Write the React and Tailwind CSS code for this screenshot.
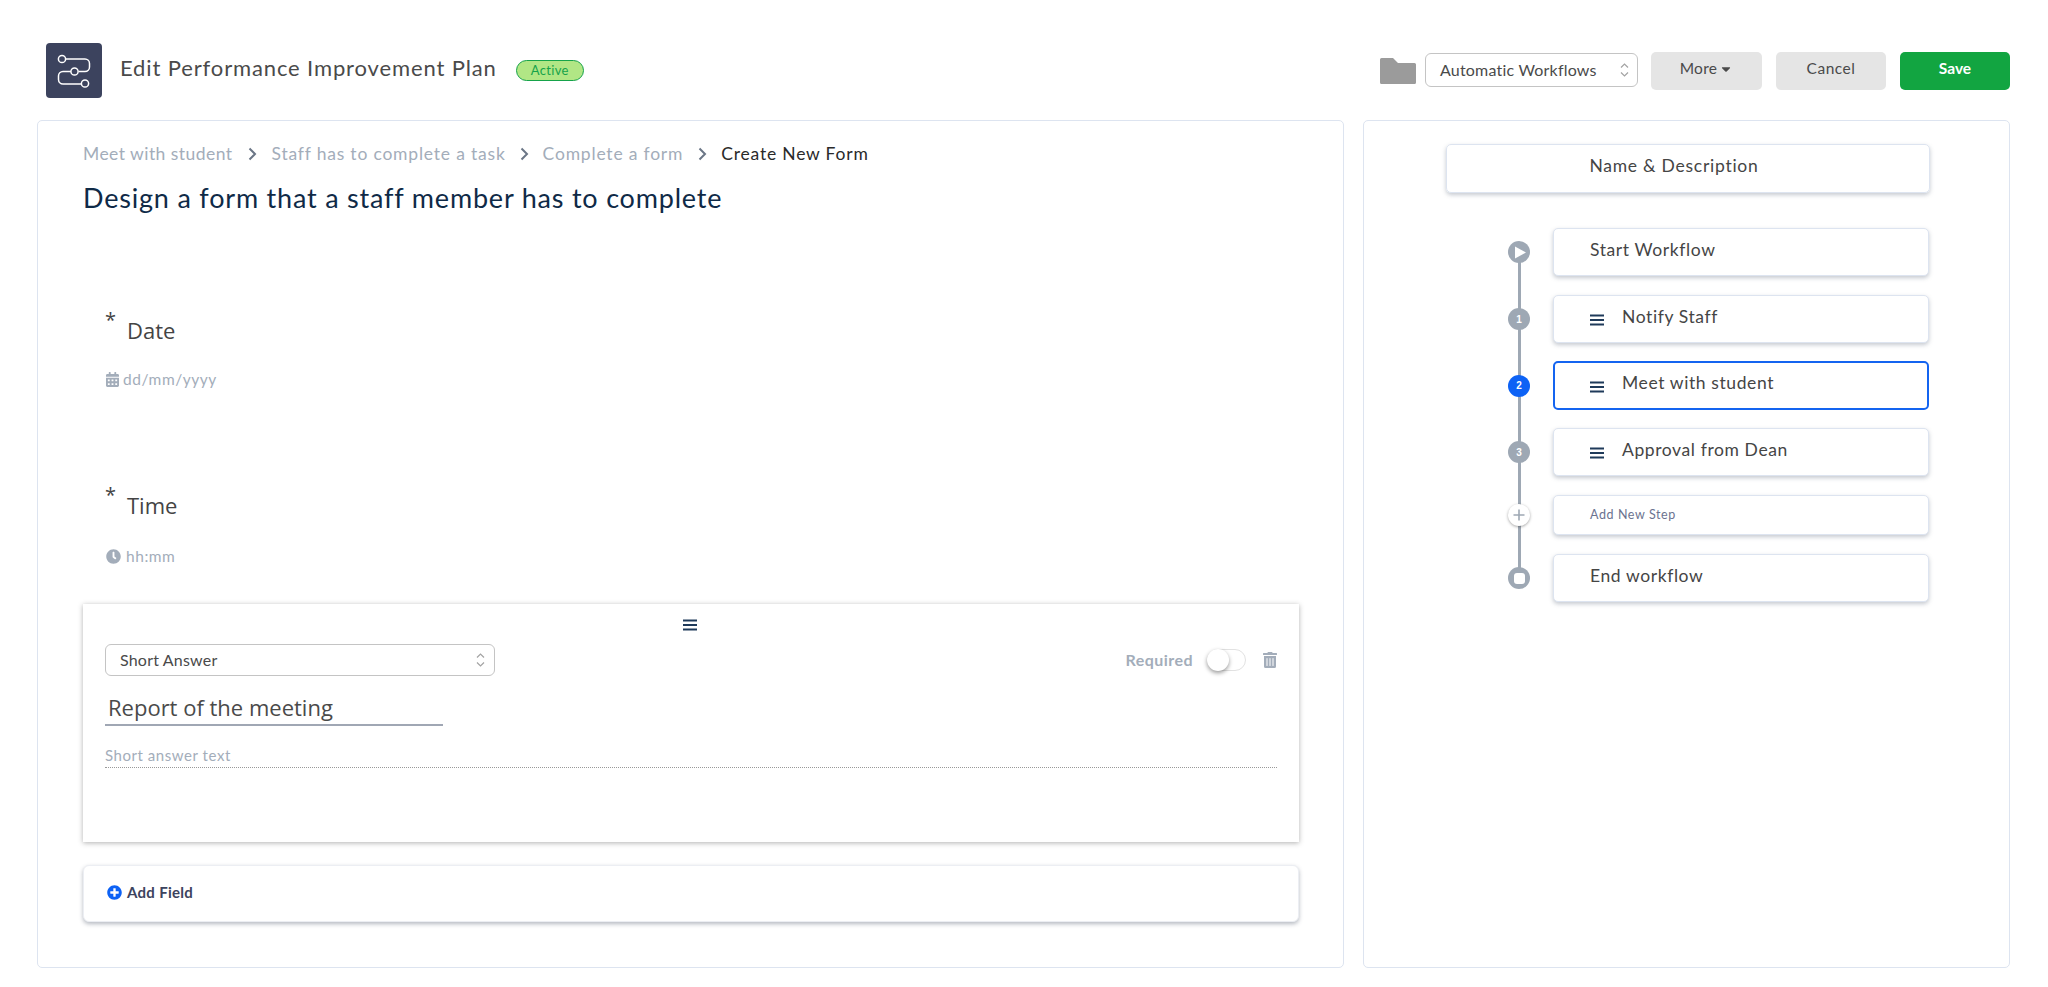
import React from "react";
import { FaCalendarAlt, FaClock, FaTrashAlt, FaPlusCircle, FaCaretDown } from "react-icons/fa";

const sans = "font-['Lato','Liberation_Sans',sans-serif]";
const open = "font-['Open_Sans','Liberation_Sans',sans-serif]";

function Updown() {
  return (
    <svg width="9" height="16" viewBox="0 0 9 16" fill="none" stroke="#a3a3a3" strokeWidth="1.2">
      <path d="M1 5.5 L4.5 2 L8 5.5" />
      <path d="M1 10.5 L4.5 14 L8 10.5" />
    </svg>
  );
}

function Bars({ w = 14 }) {
  return (
    <svg width={w} height="12" viewBox="0 0 14 12" fill="#1f3a5a">
      <rect x="0" y="0.5" width="14" height="2" />
      <rect x="0" y="5" width="14" height="2" />
      <rect x="0" y="9.5" width="14" height="2" />
    </svg>
  );
}

function Logo() {
  return (
    <div className="w-[56px] h-[55px] rounded-[4px] bg-[#3c435e] flex items-center justify-center">
      <svg width="36" height="34" viewBox="0 0 36 34" fill="none" stroke="#ffffff" strokeWidth="1.5">
        <circle cx="6" cy="5" r="3.6" />
        <path d="M9.6 5 H29 a4.5 4.5 0 0 1 4.5 4.5 v3.5 a4.5 4.5 0 0 1 -4.5 4.5 H22.5" />
        <circle cx="18.5" cy="17.5" r="3.6" />
        <path d="M14.8 17.5 H7 a4.5 4.5 0 0 0 -4.5 4.5 v3.5 a4.5 4.5 0 0 0 4.5 4.5 H25.5" />
        <circle cx="29" cy="29.5" r="3.6" />
      </svg>
    </div>
  );
}

function Folder() {
  return (
    <svg width="36" height="26" viewBox="0 0 36 26" fill="#9b9b9b" className="mt-[15px]">
      <path d="M1.5 0 H13 L18 5 H34.5 A1.5 1.5 0 0 1 36 6.5 V24.5 A1.5 1.5 0 0 1 34.5 26 H1.5 A1.5 1.5 0 0 1 0 24.5 V1.5 A1.5 1.5 0 0 1 1.5 0 Z" />
    </svg>
  );
}

function Chevron() {
  return (
    <svg width="10" height="14" viewBox="0 0 10 14" fill="none" stroke="#6b7686" strokeWidth="2">
      <path d="M2.5 1.5 L8 7 L2.5 12.5" />
    </svg>
  );
}

function Field({ label, icon, hint, gap, top, hintTop }) {
  return (
    <div className={top}>
      <div className={`${open} flex items-start pl-[22px] text-[#444]`}>
        <span className="text-[20px] leading-[20px] w-[22px]">*</span>
        <span className="text-[22px] leading-[30px] mt-[5px]">{label}</span>
      </div>
      <div className={`${sans} ${hintTop} flex items-center pl-[23px] text-[15.5px] leading-[20px] tracking-[0.55px] text-[#a3adba] ${gap}`}>
        {icon}
        <span>{hint}</span>
      </div>
    </div>
  );
}

function Step({ marker, children, h, active, mb = "mb-[19px]" }) {
  return (
    <div className={`flex items-center ${mb}`}>
      <div className="w-[22px] flex justify-center relative z-10 ml-[-1px]">{marker}</div>
      <div
        className={`ml-[23px] w-[376px] bg-white rounded-[5px] flex items-center ${h} ${sans} ${
          active
            ? "border-2 border-[#1464f0] shadow-none"
            : "border border-[#dde4f0] shadow-[0_2px_4px_rgba(90,100,120,0.35)]"
        }`}
      >
        {children}
      </div>
    </div>
  );
}

function Num({ n, blue }) {
  return (
    <div
      className={`w-[22px] h-[22px] rounded-full flex items-center justify-center text-white text-[10px] font-bold ${
        blue ? "bg-[#0d62f5]" : "bg-[#9ea8b4]"
      } font-['Liberation_Sans',sans-serif]`}
    >
      {n}
    </div>
  );
}

function StepLabel({ children, bars, active }) {
  return (
    <div className={`flex items-center text-[17.5px] tracking-[0.6px] text-[#454545] ${active ? "pl-[35px] mt-[-4px]" : "pl-[36px] mt-[-4px]"}`}>
      {bars && <span className="w-[32px] flex mt-[6px]"><Bars /></span>}
      {children}
    </div>
  );
}

export default function App() {
  return (
    <div className={`w-[2048px] h-[987px] bg-white overflow-hidden flex flex-col ${sans}`}>
      <header className="h-[120px] flex items-start pl-[46px] pr-[38px] pt-[43px]">
        <Logo />
        <h1 className="ml-[18px] mt-[11px] text-[22px] leading-[28px] tracking-[0.87px] text-[#4a4a4a] font-normal">
          Edit Performance Improvement Plan
        </h1>
        <span className="ml-[19px] mt-[17px] w-[68px] h-[21px] rounded-full bg-[#b1e685] border border-[#16a34a] text-[#16a34a] text-[13px] leading-[18px] tracking-[0.3px] text-center">
          Active
        </span>
        <div className="ml-auto flex items-start">
          <Folder />
          <div className="ml-[9px] mt-[10px] w-[213px] h-[34px] rounded-[6px] border border-[#c4c4c4] bg-white flex items-center justify-between pl-[14px] pr-[8px] text-[16px] tracking-[0.2px] text-[#4a4a4a]">
            <span>Automatic Workflows</span>
            <Updown />
          </div>
          <div className="ml-[13px] mt-[9px] w-[111px] h-[38px] rounded-[5px] bg-[#e5e5e5] flex items-center justify-center gap-[2px] text-[15.5px] tracking-[0.3px] text-[#4a4a4a] pb-[4px]">
            More <FaCaretDown className="w-[14px] h-[14px]" />
          </div>
          <div className="ml-[14px] mt-[9px] w-[110px] h-[38px] rounded-[5px] bg-[#e5e5e5] flex items-center justify-center text-[15.5px] tracking-[0.5px] text-[#4a4a4a] pb-[4px]">
            Cancel
          </div>
          <div className="ml-[14px] mt-[9px] w-[110px] h-[38px] rounded-[5px] bg-[#12a541] flex items-center justify-center text-[15.5px] font-bold text-white pb-[4px]">
            Save
          </div>
        </div>
      </header>

      <main className="flex gap-[19px] pl-[37px] pr-[38px]">
        <section className="w-[1307px] h-[848px] border border-[#dde4f0] rounded-[5px] bg-white pl-[45px] pr-[46px]">
          <nav className="mt-[22px] flex items-center text-[17.5px] leading-[22px] tracking-[0.8px] text-[#a3adba]">
            <span className="tracking-[0.45px]">Meet with student</span>
            <span className="ml-[15px] mr-[14px]"><Chevron /></span>
            <span>Staff has to complete a task</span>
            <span className="ml-[13px] mr-[14px]"><Chevron /></span>
            <span>Complete a form</span>
            <span className="ml-[14px] mr-[14px]"><Chevron /></span>
            <span className="text-[#2a2a2a]">Create New Form</span>
          </nav>
          <h2 className="mt-[16px] text-[27px] leading-[34px] tracking-[0.8px] text-[#0f2a47] font-normal">
            Design a form that a staff member has to complete
          </h2>

          <Field
            top="mt-[95px]"
            hintTop="mt-[24px]"
            label="Date"
            hint="dd/mm/yyyy"
            gap="gap-[4px]"
            icon={<FaCalendarAlt className="w-[13px] h-[15px] text-[#a3adba]" />}
          />
          <Field
            top="mt-[96px]"
            hintTop="mt-[26px]"
            label="Time"
            hint="hh:mm"
            gap="gap-[5px]"
            icon={<FaClock className="w-[15px] h-[15px] text-[#a3adba]" />}
          />

          <div className="mt-[38px] w-[1216px] h-[238px] bg-white shadow-[0_1px_5px_rgba(60,60,60,0.4)] pl-[22px] pr-[22px]">
            <div className="h-[40px] pl-[578px] pt-[15px]"><Bars /></div>
            <div className="flex items-center">
              <div className="w-[390px] h-[32px] rounded-[6px] border border-[#c4c4c4] flex items-center justify-between pl-[14px] pr-[9px] text-[16px] tracking-[0.2px] text-[#4a4a4a]">
                <span>Short Answer</span>
                <Updown />
              </div>
              <span className="ml-auto text-[16px] font-bold tracking-[0.45px] text-[#a3adba]">Required</span>
              <div className="ml-[14px] w-[39px] h-[22px] rounded-full border border-[#e2e2e2] bg-white relative">
                <div className="absolute left-[-1px] top-[-1px] w-[22px] h-[22px] rounded-full bg-white shadow-[0_2px_4px_rgba(0,0,0,0.4)]" />
              </div>
              <FaTrashAlt className="ml-[17px] w-[14px] h-[16px] text-[#a3adba]" />
            </div>
            <div className={`${open} mt-[17px] w-[338px] h-[33px] border-b-2 border-[#a0a7b4] pl-[3px] text-[22px] leading-[28px] text-[#4a4a4a]`}>
              Report of the meeting
            </div>
            <div className="mt-[19px] h-[23px] border-b border-dotted border-[#999] text-[15px] leading-[20px] tracking-[0.55px] text-[#a3adba]">
              Short answer text
            </div>
          </div>

          <div className="mt-[23px] w-[1216px] h-[57px] rounded-[6px] bg-white border border-[#eceef3] shadow-[0_2px_4px_rgba(70,80,100,0.4)] flex items-center pl-[23px] pb-[2px] text-[15px] font-bold tracking-[0.3px] text-[#3c435e]">
            <FaPlusCircle className="w-[15px] h-[15px] text-[#0d62f5] mr-[5px]" />
            Add Field
          </div>
        </section>

        <aside className="w-[647px] h-[848px] border border-[#dde4f0] rounded-[5px] bg-white">
          <div className="mt-[23px] ml-[82px] w-[484px] h-[49px] rounded-[5px] border border-[#dde4f0] shadow-[0_2px_4px_rgba(90,100,120,0.35)] flex items-center justify-center pb-[4px] pr-[28px] text-[17.5px] tracking-[0.75px] text-[#454545]">
            Name &amp; Description
          </div>
          <div className="relative ml-[145px] mt-[35px]">
            <div className="absolute left-[9px] top-[20px] w-[3px] h-[340px] bg-[#9ea8b4]" />
            <Step
              h="h-[48px]"
              marker={
                <div className="w-[22px] h-[22px] rounded-full bg-[#9ea8b4] flex items-center justify-center">
                  <svg width="12" height="13" viewBox="0 0 12 13" fill="#fff" className="ml-[2px]"><path d="M1 0.5 L12 6.5 L1 12.5 Z" /></svg>
                </div>
              }
            >
              <StepLabel>Start Workflow</StepLabel>
            </Step>
            <Step h="h-[48px]" mb="mb-[18px]" marker={<Num n="1" />}>
              <StepLabel bars>Notify Staff</StepLabel>
            </Step>
            <Step h="h-[49px]" mb="mb-[18px]" active marker={<Num n="2" blue />}>
              <StepLabel bars active>Meet with student</StepLabel>
            </Step>
            <Step h="h-[48px]" marker={<Num n="3" />}>
              <StepLabel bars>Approval from Dean</StepLabel>
            </Step>
            <Step
              h="h-[40px]"
              marker={
                <div className="w-[22px] h-[22px] rounded-full bg-white shadow-[0_1px_3px_rgba(0,0,0,0.35)] flex items-center justify-center">
                  <svg width="12" height="12" viewBox="0 0 12 12" stroke="#9ea8b4" strokeWidth="1.6"><path d="M6 0.5 V11.5 M0.5 6 H11.5" /></svg>
                </div>
              }
            >
              <div className="pl-[36px] text-[12.5px] tracking-[0.6px] text-[#6b7390]">Add New Step</div>
            </Step>
            <Step
              h="h-[48px]"
              mb="mb-0"
              marker={
                <div className="w-[22px] h-[22px] rounded-full bg-[#9ea8b4] flex items-center justify-center">
                  <div className="w-[11px] h-[11px] rounded-[3px] bg-white" />
                </div>
              }
            >
              <StepLabel>End workflow</StepLabel>
            </Step>
          </div>
        </aside>
      </main>
    </div>
  );
}
